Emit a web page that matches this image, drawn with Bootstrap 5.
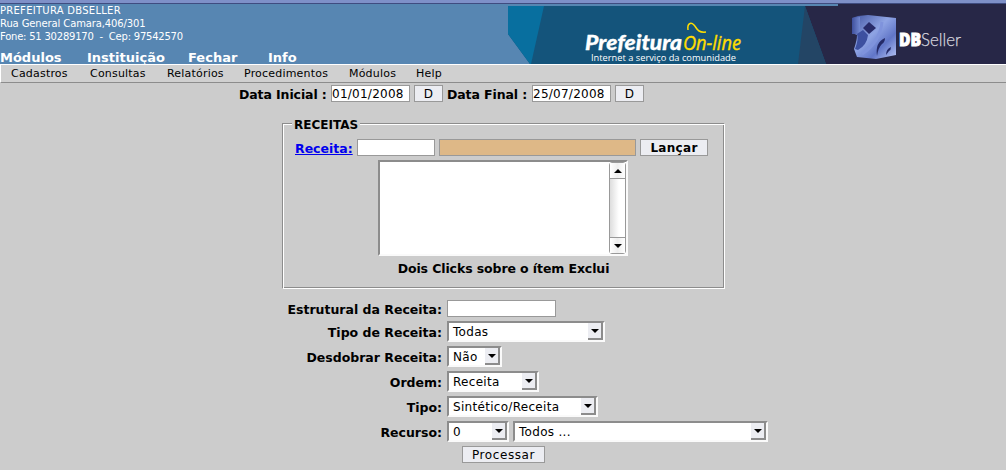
<!DOCTYPE html>
<html lang="pt-BR">
<head>
<meta charset="utf-8">
<meta name="viewport" content="width=device-width, initial-scale=1">
<title>Prefeitura On-line</title>
<link href="https://cdn.jsdelivr.net/npm/bootstrap@5.3.0/dist/css/bootstrap.min.css" rel="stylesheet">
<style>
body{background:#ccc;color:#000;font:13px/17px "DejaVu Sans",sans-serif;height:470px}
.topbar{height:64px;background:#5786b2;color:#fff}
.strip{height:4px;background:linear-gradient(#7e90c8 0 3px,#3f4c80 3px)}
.info{font-size:10px;line-height:13px;height:45px}
.info div:nth-child(1){letter-spacing:.27px}
.info div:nth-child(2){letter-spacing:-.12px}
.info div:nth-child(3){letter-spacing:-.22px}
.mainnav{font-weight:bold;line-height:17px;height:17px}
.mainnav a,.menubar a{color:inherit;text-decoration:none;white-space:nowrap}
.banner{width:498px;height:61px;margin-top:-1px;flex:none}
.menubar{height:19px;background:#d0d0d0;border-top:1px solid #fff;border-left:1px solid #fff;border-bottom:1px solid #8c8c8c;font-size:11px;line-height:17px;padding-left:10px;letter-spacing:.2px}
.lbl{font-size:12.5px;font-weight:bold;white-space:nowrap;flex:none;line-height:15px;padding-top:2px}
.tight{letter-spacing:-.1px}
.side{width:442px;text-align:right;margin-right:5px}
.field{border:1px solid #999;border-radius:0;background:#fff;height:17px;padding:1px 0 0 0;font:12px/15px "DejaVu Sans",sans-serif;color:#000;flex:none;letter-spacing:.25px}
.push{border:1px solid #999;border-radius:0;background:#ecedf2;height:17px;padding:0;font-size:12px;line-height:16px;color:#000;flex:none;letter-spacing:.3px}
.wide{letter-spacing:.6px}
.desc{background:#deb887}
.dates{margin:2px 0 0 239px}
.group{width:443px;height:166px;margin:21px 0 0 282px;border:1px solid;border-color:#8c8c8c #fff #fff #8c8c8c;position:relative;box-shadow:inset 1px 1px #fff,inset -1px -1px #8c8c8c}
.group legend{position:absolute;left:9px;top:-8px;width:auto;background:#ccc;padding:0 2px;margin:0;font-size:12px;line-height:18px;font-weight:bold}
.items{width:250px;height:96px;background:#fff;border:2px solid;border-color:#8c8c8c #fafafa #fafafa #8c8c8c;margin:4px 0 0 95px}
.scroll{width:17px;border:1px solid #999;border-radius:3px;background:linear-gradient(90deg,#ddd,#fff 60%)}
.scroll span{height:16px;display:flex;align-items:center;justify-content:center;background:linear-gradient(90deg,#fff,#eee 50%,#fff)}
.edge-b{border-bottom:1px solid #999}
.edge-t{border-top:1px solid #999}
.pick{height:21px;background:#fff;border:2px solid;border-color:#8c8c8c #fafafa #fafafa #8c8c8c;padding:0 0 0 4px;font-size:12px;line-height:18px;flex:none;letter-spacing:.3px}
.drop{width:15px;height:17px;background:#ecedf2;border:solid #8c8c8c;border-width:0 2px 2px 0;display:flex;align-items:center;justify-content:center}
.formrow{height:25px}
.formrow .side{line-height:19px}
</style>
</head>
<body>
<header class="topbar">
 <div class="strip"></div>
 <div class="d-flex justify-content-between">
  <div>
   <div class="info"><div>PREFEITURA DBSELLER</div><div>Rua General Camara,406/301</div><div>Fone: 51 30289170 &nbsp;- &nbsp;Cep: 97542570</div></div>
   <nav class="mainnav d-flex"><a href="#" style="width:87px">Módulos</a><a href="#" style="width:101px">Instituição</a><a href="#" style="width:80px">Fechar</a><a href="#">Info</a></nav>
  </div>
  <svg class="banner" viewBox="508 3 498 61">
   <defs><linearGradient id="cube" x2="1" y2="1"><stop stop-color="#4053a0"/><stop offset=".45" stop-color="#8fa4e4"/><stop offset=".7" stop-color="#6176c8"/><stop offset="1" stop-color="#b7c5f5"/></linearGradient>
   <linearGradient id="face" x2="1"><stop stop-color="#3f509d"/><stop offset="1" stop-color="#7389d2"/></linearGradient></defs>
   <path fill="#14547b" d="M508 6H838V64H508Z"/>
   <path fill="#5786b2" d="M508 3H838V6H508ZM508 34L530 64H508Z"/>
   <path fill="#086f9f" d="M508 6H544L531 64H530L508 34Z"/>
   <path fill="#272747" d="M838 4H1006V64H826L805 6H838Z"/>
   <path fill="#5786b2" d="M750 4H838V6H750Z"/><path fill="#3f4c80" d="M508 3H1006V4H508Z"/>
   <path fill="#234565" d="M805 6L826 64H798Z"/>
   <text x="585" y="49.5" fill="#fff" stroke="#fff" stroke-width=".3" font-family="Lato" font-size="21.5" font-weight="900" font-style="italic" textLength="97" lengthAdjust="spacingAndGlyphs">Prefeitura</text>
   <text x="683" y="49.5" fill="#fd0" stroke="#fd0" stroke-width=".4" font-family="Open Sans" font-size="20" font-style="italic" textLength="58" lengthAdjust="spacingAndGlyphs">On-line</text>
   <path fill="none" stroke="#fd0" stroke-width="1.5" d="M688 30C687 23 691 22 694 25S697 33 706 32"/>
   <text x="591" y="61" fill="#fff" font-family="Open Sans" font-size="9.5" textLength="145" lengthAdjust="spacingAndGlyphs">Internet a serviço da comunidade</text>
   <path fill="url(#cube)" d="M858 16L868 15L896 18V55L876 59L857 57L854 49Q857 40 857 35L852 33V18Z"/>
   <path fill="url(#face)" d="M852 18L860 17V34L852 34Z"/>
   <path fill="#282b69" d="M863 28L869 22L876 28L869 34Z"/>
   <path fill="#3d50a0" d="M857 34L863 30L868 35Q867 45 858 50L855 49Q859 39 857 34Z"/>
   <path fill="none" stroke="#7f93dc" stroke-width="3" d="M882 22Q880 42 862 54"/>
   <path fill="#242a68" d="M877 56Q875 42 885 38Q885 42 882 44Q878 48 877 56ZM886 55Q886 49 891 47Q891 50 889 51Z"/>
   <text x="899" y="45.5" fill="#fff" stroke="#fff" stroke-width=".9" font-family="Open Sans" font-size="17" font-weight="800" textLength="22" lengthAdjust="spacingAndGlyphs">DB</text>
   <text x="921" y="45.5" fill="#d5d5df" stroke="#d5d5df" stroke-width=".25" font-family="Lato" font-weight="300" font-size="18" textLength="40" lengthAdjust="spacingAndGlyphs">Seller</text>
  </svg>
 </div>
</header>
<nav class="menubar d-flex"><a href="#" style="width:79px">Cadastros</a><a href="#" style="width:77px">Consultas</a><a href="#" style="width:77px">Relatórios</a><a href="#" style="width:105px">Procedimentos</a><a href="#" style="width:67px">Módulos</a><a href="#">Help</a></nav>
<main>
 <div class="dates d-flex align-items-center">
  <span class="lbl tight" style="width:92px">Data Inicial :</span><input class="field" style="width:79px" value="01/01/2008"><button class="push mx-1" style="width:29px">D</button>
  <span class="lbl tight" style="width:85px">Data Final :</span><input class="field" style="width:79px" value="25/07/2008"><button class="push ms-1" style="width:29px">D</button>
 </div>
 <fieldset class="group">
  <legend>RECEITAS</legend>
  <div class="d-flex align-items-center" style="margin:15px 0 0 12px"><a class="lbl" href="#" style="width:62px;color:#00e">Receita:</a><input class="field" style="width:78px"><input class="field desc ms-1" style="width:197px"><button class="push fw-bold ms-1" style="width:68px">Lançar</button></div>
  <div class="items d-flex justify-content-end"><div class="scroll d-flex flex-column justify-content-between"><span class="edge-b"><svg width="8" height="4"><path d="M0 4L4 0L8 4Z"/></svg></span><span class="edge-t"><svg width="8" height="4"><path d="M0 0L4 4L8 0Z"/></svg></span></div></div>
  <div class="lbl tight text-center" style="margin-top:3px">Dois Clicks sobre o ítem Exclui</div>
 </fieldset>
 <div class="d-flex align-items-center" style="height:17px;margin:11px 0 4px"><span class="lbl side">Estrutural da Receita:</span><input class="field" style="width:109px"></div>
 <div class="formrow d-flex"><span class="lbl side">Tipo de Receita:</span><div class="pick d-flex justify-content-between" style="width:158px">Todas<span class="drop"><svg width="8" height="4"><path d="M0 0H8L4 4Z"/></svg></span></div></div>
 <div class="formrow d-flex"><span class="lbl side">Desdobrar Receita:</span><div class="pick d-flex justify-content-between" style="width:55px">Não<span class="drop"><svg width="8" height="4"><path d="M0 0H8L4 4Z"/></svg></span></div></div>
 <div class="formrow d-flex"><span class="lbl side">Ordem:</span><div class="pick d-flex justify-content-between" style="width:92px">Receita<span class="drop"><svg width="8" height="4"><path d="M0 0H8L4 4Z"/></svg></span></div></div>
 <div class="formrow d-flex"><span class="lbl side">Tipo:</span><div class="pick d-flex justify-content-between" style="width:151px">Sintético/Receita<span class="drop"><svg width="8" height="4"><path d="M0 0H8L4 4Z"/></svg></span></div></div>
 <div class="formrow d-flex"><span class="lbl side">Recurso:</span><div class="pick d-flex justify-content-between me-1" style="width:62px">0<span class="drop"><svg width="8" height="4"><path d="M0 0H8L4 4Z"/></svg></span></div><div class="pick d-flex justify-content-between" style="width:255px">Todos ...<span class="drop"><svg width="8" height="4"><path d="M0 0H8L4 4Z"/></svg></span></div></div>
 <button class="push wide d-block" style="width:83px;margin-left:462px">Processar</button>
</main>
<script src="https://cdn.jsdelivr.net/npm/bootstrap@5.3.0/dist/js/bootstrap.bundle.min.js"></script>
</body>
</html>
